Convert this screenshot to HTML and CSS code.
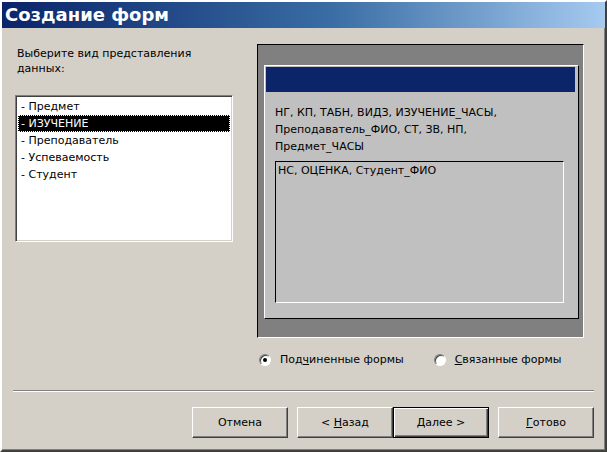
FILE: index.html
```html
<!DOCTYPE html>
<html lang="ru">
<head>
    <meta charset="UTF-8">
    <title>Создание форм</title>
    <link rel="stylesheet" href="styles.css">
</head>
<body>
<div class="window">
    <div class="titlebar">Создание форм</div>

    <div class="main">
        <div class="left">
            <p class="prompt">Выберите вид представления<br>данных:</p>
            <div class="listbox">
                <div class="item">- Предмет</div>
                <div class="item selected">- ИЗУЧЕНИЕ</div>
                <div class="item">- Преподаватель</div>
                <div class="item">- Успеваемость</div>
                <div class="item">- Студент</div>
            </div>
        </div>

        <div class="right">
            <div class="preview">
                <div class="form">
                    <div class="caption"></div>
                    <div class="fields">НГ, КП, ТАБН, ВИДЗ, ИЗУЧЕНИЕ_ЧАСЫ,<br>Преподаватель_ФИО, СТ, ЗВ, НП,<br>Предмет_ЧАСЫ</div>
                    <div class="subform">НС, ОЦЕНКА, Студент_ФИО</div>
                </div>
            </div>
            <div class="radios">
                <label class="radio-option"><span class="radio checked"></span>Под<u>ч</u>иненные формы</label>
                <label class="radio-option second"><span class="radio"></span><u>С</u>вязанные формы</label>
            </div>
        </div>
    </div>

    <div class="separator"></div>

    <div class="buttons">
        <button class="btn">Отмена</button>
        <button class="btn back">&lt; <u>Н</u>азад</button>
        <button class="btn default"><u>Д</u>алее &gt;</button>
        <button class="btn finish"><u>Г</u>отово</button>
    </div>
</div>
</body>
</html>
```

FILE: styles.css
```css
html, body { margin: 0; padding: 0; }
body { font-family: "DejaVu Sans", Verdana, sans-serif; font-size: 11px; color: #000; background: #d4d0c8; }

.window {
    width: 607px; height: 452px; box-sizing: border-box;
    background: #d4d0c8;
    border: 2px solid; border-color: #fff #404040 #404040 #fff;
    box-shadow: inset -1px -1px 0 #808080;
}

.titlebar {
    height: 26px; line-height: 26px; padding-left: 3px;
    background: linear-gradient(to right, #0a246a 0%, #3a6ea5 55%, #a6caf0 100%);
    color: #fff; font-weight: bold; font-size: 18px; white-space: nowrap;
}

.main { height: 362px; box-sizing: border-box; padding: 16px 0 0 13px; display: flex; gap: 24px; }

.left { width: 218px; padding-top: 2px; }
.prompt { margin: 0; padding-left: 2px; line-height: 15px; }

.listbox {
    margin-top: 19px; height: 147px; box-sizing: border-box;
    background: #fff;
    border: 1px solid; border-color: #808080 #fff #fff #808080;
    box-shadow: inset 1px 1px 0 #404040, inset -1px -1px 0 #d4d0c8;
    padding: 2px 2px;
}
.item { height: 17px; line-height: 17px; padding-left: 3px; white-space: nowrap; }
.item.selected { background: #000; color: #fff; outline: 1px dotted #fff; outline-offset: -1px; }

.right { width: 327px; }

.preview {
    height: 294px; box-sizing: border-box;
    background: #808080;
    border: 1px solid; border-color: #000 #fff #fff #000;
    padding: 20px 4px 0 6px;
}
.form {
    height: 254px; box-sizing: border-box;
    background: #c0c0c0;
    border: 1px solid; border-color: #fff #000 #000 #fff;
    padding: 1px 3px 0 1px;
}
.caption { height: 25px; background: #0c2468; }
.fields { margin: 12px 0 0 9px; line-height: 17px; white-space: nowrap; }
.subform {
    margin: 6px 0 0 9px; width: 289px; height: 142px; box-sizing: border-box;
    border: 1px solid; border-color: #000 #fff #fff #000;
    padding: 1px 0 0 2px; line-height: 15px; white-space: nowrap;
}

.radios { display: flex; align-items: center; margin-top: 14px; height: 15px; padding-left: 2px; }
.radio-option { display: flex; align-items: center; white-space: nowrap; }
.radio-option.second { margin-left: 30px; }
.radio {
    width: 12px; height: 12px; box-sizing: border-box; border-radius: 50%;
    margin-right: 9px; position: relative;
    background: #fff;
    border: 1px solid; border-color: #808080 #fff #fff #808080;
    box-shadow: inset 1px 1px 0 #404040;
}
.radio.checked::after {
    content: ""; position: absolute; left: 3px; top: 3px;
    width: 4px; height: 4px; border-radius: 50%; background: #000;
}

.separator { margin: 0 11px; border-top: 1px solid #808080; border-bottom: 1px solid #fff; }

.buttons { display: flex; justify-content: flex-end; padding: 15px 11px 0 0; }
.btn {
    width: 96px; height: 31px; box-sizing: border-box; margin: 0;
    font-family: "DejaVu Sans", Verdana, sans-serif; font-size: 11px; color: #000;
    background: #d4d0c8;
    border: 1px solid; border-color: #fff #404040 #404040 #fff;
    box-shadow: inset -1px -1px 0 #808080;
    padding: 0;
}
.btn.back { margin-left: 9px; }
.btn.default { border: 1px solid #000; box-shadow: inset 1px 1px 0 #fff, inset -1px -1px 0 #404040, inset -2px -2px 0 #808080; }
.btn.finish { margin-left: 9px; }
```
